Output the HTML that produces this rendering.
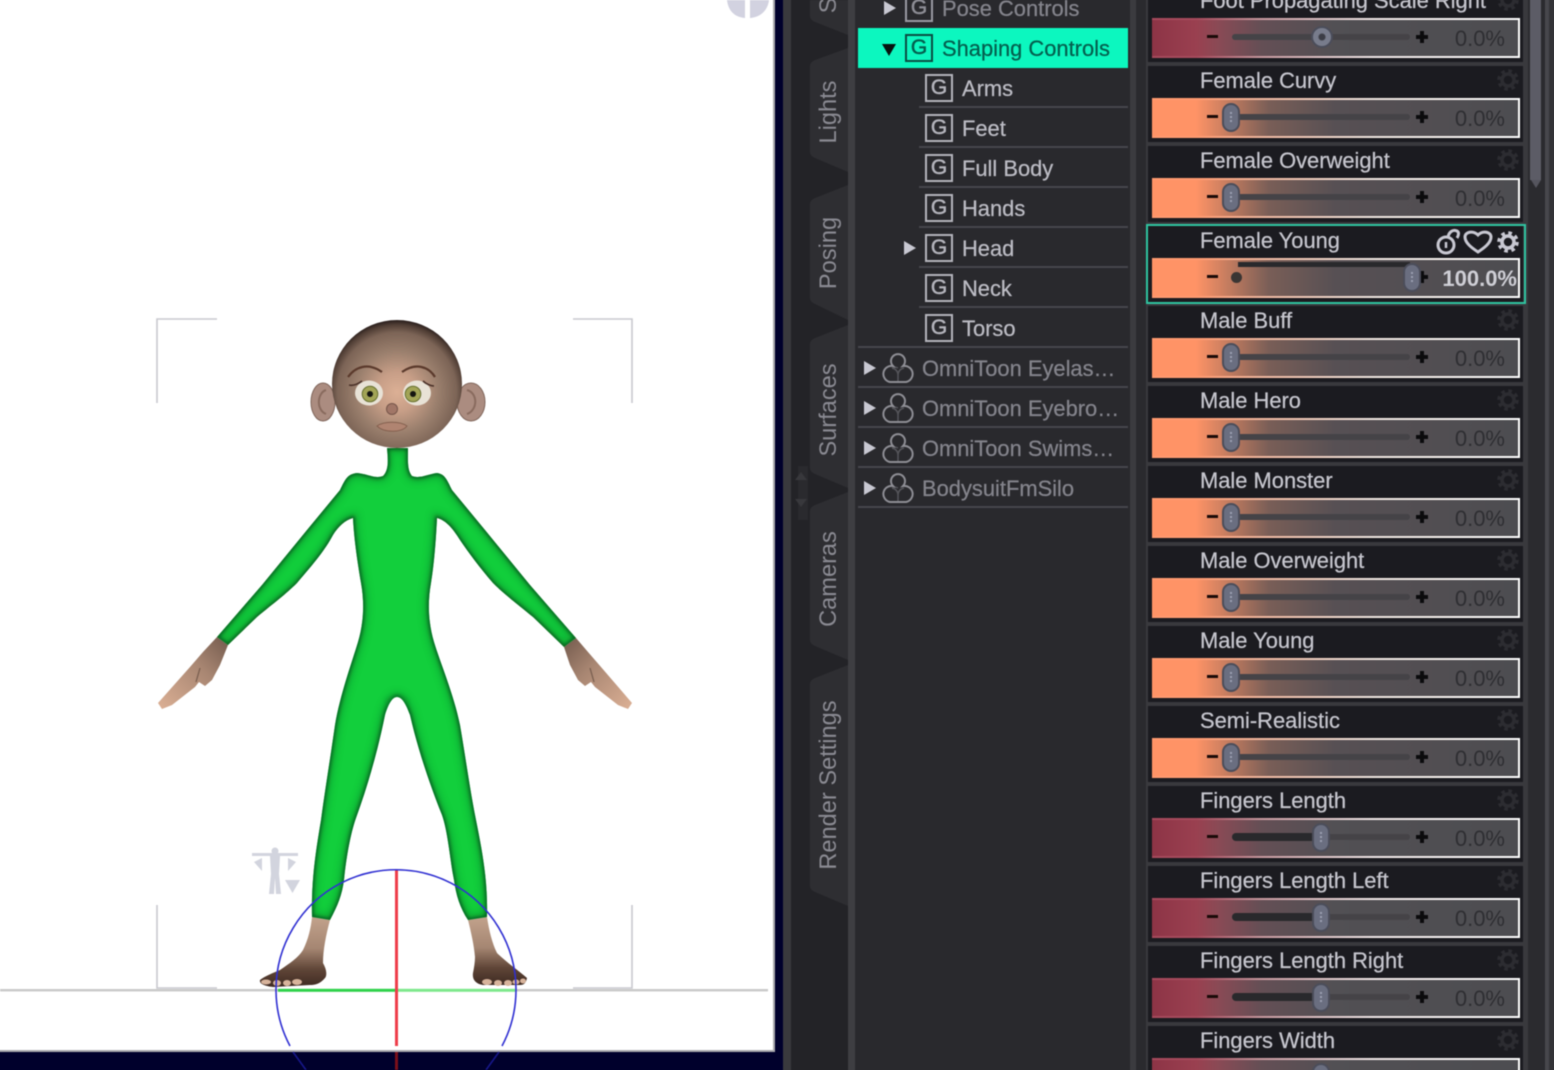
<!DOCTYPE html>
<html><head><meta charset="utf-8"><style>
html,body{margin:0;padding:0;width:1554px;height:1070px;overflow:hidden;background:#333337}
#o{position:absolute;left:0;top:0;width:1554px;height:1070px;overflow:hidden}
#w{position:absolute;left:0;top:0;width:1554px;height:1070px;filter:blur(.55px);font-family:"Liberation Sans",sans-serif}
.a{position:absolute}
.t{position:absolute;left:828.5px;transform:translate(-50%,-50%) rotate(-90deg);font-size:23.6px;line-height:26px;color:#8a8a92;white-space:nowrap}
.n{position:absolute;height:40px;line-height:39px;font-size:21.9px;white-space:nowrap;-webkit-text-stroke:.25px currentColor}
.c{color:#bcbcc4}.d{color:#84848c}
.ln{position:absolute;height:2px;background:#45454c;right:426px}
.gb{position:absolute;width:24px;height:24px;border:2px solid #b4b4bc;text-align:center;font-size:21px;line-height:24px;color:#b4b4bc;-webkit-text-stroke:.5px currentColor}
.tri{position:absolute;width:0;height:0;border-left:12px solid #c8c8d2;border-top:7px solid transparent;border-bottom:7px solid transparent}
.om{position:absolute;left:882px;width:32px;height:32px;overflow:visible}
.r{position:absolute;left:1148px;width:375px;height:76px;background:#1b1b20}
.r b{position:absolute;left:52px;top:1px;font-weight:normal;font-size:21.9px;line-height:28px;color:#c6c6ce;white-space:nowrap;-webkit-text-stroke:.25px currentColor}
.bar{position:absolute;left:4px;top:32px;width:368px;height:40px;background:linear-gradient(90deg,#ff9a70 0,#ff9a70 12%,#f0b8a0 30%,#efe6e0 60%,#fff 100%)}
.red .bar{background:linear-gradient(90deg,#a64a5c 0,#a64a5c 12%,#c89aa0 30%,#efe6e6 60%,#fff 100%)}
.in{position:absolute;left:0;top:2px;right:2px;bottom:2px;background:linear-gradient(90deg,#ff9366 0,#ff9366 12%,#c97e60 20%,#795e57 32%,#575054 50%,#4d4d51 100%)}
.red .in{background:linear-gradient(90deg,#8d3446 0,#9a4050 12%,#8a4a55 18%,#644f55 30%,#525054 50%,#4d4d51 100%)}
.mi{position:absolute;left:59px;top:49px;width:11px;height:3px;background:#1a0a08}
.p1{position:absolute;left:268px;top:49px;width:12px;height:4px;background:#0b0b0d}
.p2{position:absolute;left:272px;top:45px;width:4px;height:12px;background:#0b0b0d}
.tr{position:absolute;left:84px;top:48px;width:178px;height:6px;background:#454347;border-radius:3px}
.tr2{position:absolute;left:84px;top:47px;width:90px;height:8px;background:#29292c;border-radius:4px}
.v{position:absolute;right:18px;top:33px;line-height:40px;font-size:22px;color:#2e2e32}
.th{position:absolute;left:74px;top:37px;width:14px;height:25px;border:2px solid #4b4d5a;background:#6a6e80;border-radius:9px}
.th2{left:164px}
.th:after{content:"";position:absolute;left:6px;top:7px;width:2px;height:11px;background:repeating-linear-gradient(#9a9eb0 0,#9a9eb0 2px,transparent 2px,transparent 4px)}
.gr{position:absolute;left:348px;top:2px;width:24px;height:24px;color:#2c2c31}
</style></head><body><div id="o"><div id="w">
<svg width="0" height="0" style="position:absolute"><defs>
<symbol id="gear" viewBox="0 0 24 24"><circle cx="12" cy="12" r="9" fill="none" stroke="currentColor" stroke-width="3.6" stroke-dasharray="3.6 3.47"/><circle cx="12" cy="12" r="6" fill="none" stroke="currentColor" stroke-width="3.6"/></symbol>
<symbol id="om" viewBox="0 0 32 32" overflow="visible"><path d="M16 16A7 7 0 0 0 10 16M16 23A7 7 0 0 1 22 16M16 23A7 7 0 0 0 10 16M16 23V30" fill="none" stroke="#55555b" stroke-width="1.5"/><path d="M11 14A7 7 0 1 1 21 14A8 8 0 1 1 24 30L8 30A8 8 0 1 1 11 14Z" fill="none" stroke="#8e8e95" stroke-width="2"/></symbol>
<radialGradient id="hd" gradientUnits="userSpaceOnUse" cx="397" cy="392" r="71"><stop offset="0" stop-color="#dcb095"/><stop offset=".28" stop-color="#c79e87"/><stop offset=".58" stop-color="#9a7f6d"/><stop offset=".84" stop-color="#7c6456"/><stop offset=".95" stop-color="#4f3d34"/><stop offset="1" stop-color="#2f2320"/></radialGradient>
<linearGradient id="sk" x1="0" y1="0" x2="0" y2="1"><stop offset="0" stop-color="#c2a28c"/><stop offset=".45" stop-color="#a58672"/><stop offset=".75" stop-color="#5f4537"/><stop offset="1" stop-color="#3e2a22"/></linearGradient>
<linearGradient id="hn" x1="1" y1="0" x2="0" y2="1"><stop offset="0" stop-color="#735a4d"/><stop offset=".4" stop-color="#a88672"/><stop offset="1" stop-color="#dcb095"/></linearGradient>
<linearGradient id="hr" x1="0" y1="0" x2="1" y2="1"><stop offset="0" stop-color="#735a4d"/><stop offset=".4" stop-color="#a88672"/><stop offset="1" stop-color="#dcb095"/></linearGradient>
<filter id="bl" x="-10%" y="-10%" width="120%" height="120%"><feGaussianBlur stdDeviation="1.8"/></filter>
<filter id="bw" x="-10%" y="-10%" width="120%" height="120%"><feGaussianBlur stdDeviation="4"/></filter>
<clipPath id="bc"><path id="bp" d="M387 448C388 460 389 470 383 476C375 479 368 474 357 473C347 474 345 480 340 490L307 530L262 585L217 637L228 645L257 617C275 602 285 595 297 583C315 562 325 550 333 535C338 527 345 520 353 518C354 540 358 565 361 583C365 605 363 625 358 642C352 662 340 695 335 725C330 760 325 790 321 820C316 850 311 880 312 917L330 920C338 905 342 895 344 880C346 860 350 835 356 818C368 785 378 750 385 715C388 705 392 697 397 697C402 697 406 704 410 715C418 750 430 785 442 815C448 832 450 860 454 880C456 895 460 908 468 920L487 917C488 880 482 850 476 820C470 790 466 760 460 725C454 695 440 662 434 642C429 625 427 605 431 583C434 565 436 540 437 518C445 520 452 527 460 540C468 552 480 568 493 583C505 595 515 602 533 617L564 647L576 638L530 585L485 530L452 490C447 480 445 474 437 473C428 474 420 479 412 476C407 470 408 460 408 448Z"/></clipPath>
</defs></svg>

<!-- chrome -->
<div class="a" style="left:-10px;top:-10px;width:783px;height:1060px;background:#fff"></div>
<div class="a" style="left:773px;top:-10px;width:2px;height:1062px;background:#a9a9ad"></div>
<div class="a" style="left:-10px;top:1050px;width:785px;height:2px;background:#a9a9ad"></div>
<div class="a" style="left:775px;top:-10px;width:8px;height:1090px;background:#00002c"></div>
<div class="a" style="left:-10px;top:1052px;width:793px;height:28px;background:#00002c"></div>
<div class="a" style="left:783px;top:-10px;width:8px;height:1090px;background:#39393d"></div>
<div class="a" style="left:791px;top:-10px;width:57px;height:1090px;background:#232327"></div>
<div class="a" style="left:848px;top:-10px;width:7px;height:1090px;background:#3e3e42"></div>
<div class="a" style="left:855px;top:-10px;width:275px;height:1090px;background:#29292d"></div>
<div class="a" style="left:1130px;top:-10px;width:6px;height:1090px;background:#3b3b3f"></div>
<div class="a" style="left:1136px;top:-10px;width:10px;height:1090px;background:#2a2a2e"></div>
<div class="a" style="left:1146px;top:-10px;width:382px;height:1090px;background:#39393d"></div>
<div class="a" style="left:1528px;top:-10px;width:17px;height:1090px;background:#2b2b2f"></div>
<div class="a" style="left:1530px;top:-10px;width:11px;height:190px;background:#5c5c66"></div>
<div class="a" style="left:1531px;top:180px;width:0;height:0;border-left:5px solid transparent;border-right:5px solid transparent;border-top:8px solid #55555e"></div>
<div class="a" style="left:1545px;top:-10px;width:4px;height:1090px;background:#47474c"></div>
<div class="a" style="left:1549px;top:-10px;width:15px;height:1090px;background:#333337"></div>

<!-- tabs -->
<svg class="a" style="left:791px;top:0" width="57" height="1070" fill="#2e2e32">
<path d="M19 -20V16Q19 20 24 22L57 35V-20Z"/>
<path d="M57 48L24 60Q19 62 19 66V152Q19 156 24 158L57 172Z"/>
<path d="M57 185L24 198Q19 200 19 204V298Q19 302 24 304L57 320Z"/>
<path d="M57 325L24 338Q19 340 19 344V468Q19 472 24 474L57 488Z"/>
<path d="M57 492L24 505Q19 507 19 511V640Q19 644 24 646L57 660Z"/>
<path d="M57 665L24 678Q19 680 19 684V886Q19 890 24 892L57 906Z"/>
<rect x="7" y="466" width="10" height="54" fill="#2a2a2e"/>
<path d="M7 472L13 480H1Z" fill="#38383c" transform="translate(3 0)"/><path d="M4 491L10 483H-2Z" fill="#38383c" transform="translate(6 16)"/>
</svg>
<div class="t" style="top:-30px">Shaping</div>
<div class="t" style="top:112px">Lights</div>
<div class="t" style="top:253px">Posing</div>
<div class="t" style="top:410px">Surfaces</div>
<div class="t" style="top:579px">Cameras</div>
<div class="t" style="top:785px">Render Settings</div>

<!-- tree -->
<div class="a" style="left:858px;top:28px;width:270px;height:40px;background:#0cf7bf"></div>
<div class="tri" style="left:884px;top:1px"></div>
<div class="gb" style="left:905px;top:-6px;color:#8e8e96;border-color:#9a9aa2">G</div><div class="n d" style="left:942px;top:-11px">Pose Controls</div>
<div class="tri" style="left:882px;top:44px;border:7px solid transparent;border-top:12px solid #07120f;border-bottom:0"></div>
<div class="gb" style="left:905px;top:34px;color:#045f4e;border-color:#0a4c42">G</div><div class="n" style="left:942px;top:29px;color:#045f4e">Shaping Controls</div>

<div class="gb" style="left:925px;top:74px">G</div><div class="n c" style="left:962px;top:69px">Arms</div><div class="ln" style="left:919px;top:106px"></div>
<div class="gb" style="left:925px;top:114px">G</div><div class="n c" style="left:962px;top:109px">Feet</div><div class="ln" style="left:919px;top:146px"></div>
<div class="gb" style="left:925px;top:154px">G</div><div class="n c" style="left:962px;top:149px">Full Body</div><div class="ln" style="left:919px;top:186px"></div>
<div class="gb" style="left:925px;top:194px">G</div><div class="n c" style="left:962px;top:189px">Hands</div><div class="ln" style="left:919px;top:226px"></div>
<div class="tri" style="left:904px;top:241px"></div>
<div class="gb" style="left:925px;top:234px">G</div><div class="n c" style="left:962px;top:229px">Head</div><div class="ln" style="left:919px;top:266px"></div>
<div class="gb" style="left:925px;top:274px">G</div><div class="n c" style="left:962px;top:269px">Neck</div><div class="ln" style="left:919px;top:306px"></div>
<div class="gb" style="left:925px;top:314px">G</div><div class="n c" style="left:962px;top:309px">Torso</div><div class="ln" style="left:858px;top:346px"></div>

<div class="tri" style="left:864px;top:361px"></div><svg class="om" style="top:352px"><use href="#om"/></svg><div class="n d" style="left:922px;top:349px">OmniToon Eyelas…</div><div class="ln" style="left:858px;top:386px"></div>
<div class="tri" style="left:864px;top:401px"></div><svg class="om" style="top:392px"><use href="#om"/></svg><div class="n d" style="left:922px;top:389px">OmniToon Eyebro…</div><div class="ln" style="left:858px;top:426px"></div>
<div class="tri" style="left:864px;top:441px"></div><svg class="om" style="top:432px"><use href="#om"/></svg><div class="n d" style="left:922px;top:429px">OmniToon Swims…</div><div class="ln" style="left:858px;top:466px"></div>
<div class="tri" style="left:864px;top:481px"></div><svg class="om" style="top:472px"><use href="#om"/></svg><div class="n d" style="left:922px;top:469px">BodysuitFmSilo</div><div class="ln" style="left:858px;top:506px"></div>

<!-- sliders -->
<div class="r red" style="top:-14px"><b>Foot Propagating Scale Right</b><svg class="gr"><use href="#gear"/></svg><div class="bar"><div class="in"></div></div><div class="mi"></div><div class="tr"></div><div class="p1"></div><div class="p2"></div><div class="v">0.0%</div><div class="a" style="left:163px;top:40px;width:18px;height:18px;border-radius:50%;border:2px solid #4b4d5a;background:radial-gradient(circle,#3c3d46 0,#3c3d46 3px,#787c8c 4px)"></div></div>

<div class="r" style="top:66px"><b>Female Curvy</b><svg class="gr"><use href="#gear"/></svg><div class="bar"><div class="in"></div></div><div class="mi"></div><div class="tr"></div><div class="p1"></div><div class="p2"></div><div class="v">0.0%</div><div class="th"></div></div>
<div class="r" style="top:146px"><b>Female Overweight</b><svg class="gr"><use href="#gear"/></svg><div class="bar"><div class="in"></div></div><div class="mi"></div><div class="tr"></div><div class="p1"></div><div class="p2"></div><div class="v">0.0%</div><div class="th"></div></div>

<div class="a" style="left:1146px;top:224px;width:376px;height:76px;border:2px solid #2fc4a0"></div>
<div class="r" style="top:226px"><b>Female Young</b>
<svg class="a" style="left:286px;top:0" width="90" height="30" fill="none" stroke="#c8c8d2" stroke-width="3"><circle cx="12" cy="19" r="8"/><path d="M12 16V22" stroke-width="2.5"/><path d="M14 11C15 6 19 3 23 5C25 6 25 9 23 12"/><path d="M44 26C38 22 31 17 31 11C31 6 39 4 44 9C49 4 57 6 57 11C57 17 50 22 44 26Z"/></svg>
<svg class="a" style="left:348px;top:4px;color:#c8c8d2" width="24" height="24"><use href="#gear"/></svg>
<div class="bar"><div class="in"></div></div><div class="mi"></div><div class="p1"></div><div class="p2"></div>
<div class="a" style="left:90px;top:36px;width:172px;height:5px;background:#29292c"></div>
<div class="a" style="left:83px;top:46px;width:11px;height:11px;border-radius:50%;background:#3a3533"></div>
<div class="th" style="left:255px"></div>
<div class="v" style="right:6px;font-weight:bold;color:#cfcfd6">100.0%</div></div>

<div class="r" style="top:306px"><b>Male Buff</b><svg class="gr"><use href="#gear"/></svg><div class="bar"><div class="in"></div></div><div class="mi"></div><div class="tr"></div><div class="p1"></div><div class="p2"></div><div class="v">0.0%</div><div class="th"></div></div>
<div class="r" style="top:386px"><b>Male Hero</b><svg class="gr"><use href="#gear"/></svg><div class="bar"><div class="in"></div></div><div class="mi"></div><div class="tr"></div><div class="p1"></div><div class="p2"></div><div class="v">0.0%</div><div class="th"></div></div>
<div class="r" style="top:466px"><b>Male Monster</b><svg class="gr"><use href="#gear"/></svg><div class="bar"><div class="in"></div></div><div class="mi"></div><div class="tr"></div><div class="p1"></div><div class="p2"></div><div class="v">0.0%</div><div class="th"></div></div>
<div class="r" style="top:546px"><b>Male Overweight</b><svg class="gr"><use href="#gear"/></svg><div class="bar"><div class="in"></div></div><div class="mi"></div><div class="tr"></div><div class="p1"></div><div class="p2"></div><div class="v">0.0%</div><div class="th"></div></div>
<div class="r" style="top:626px"><b>Male Young</b><svg class="gr"><use href="#gear"/></svg><div class="bar"><div class="in"></div></div><div class="mi"></div><div class="tr"></div><div class="p1"></div><div class="p2"></div><div class="v">0.0%</div><div class="th"></div></div>
<div class="r" style="top:706px"><b>Semi-Realistic</b><svg class="gr"><use href="#gear"/></svg><div class="bar"><div class="in"></div></div><div class="mi"></div><div class="tr"></div><div class="p1"></div><div class="p2"></div><div class="v">0.0%</div><div class="th"></div></div>

<div class="r red" style="top:786px"><b>Fingers Length</b><svg class="gr"><use href="#gear"/></svg><div class="bar"><div class="in"></div></div><div class="mi"></div><div class="tr"></div><div class="tr2"></div><div class="p1"></div><div class="p2"></div><div class="v">0.0%</div><div class="th th2"></div></div>
<div class="r red" style="top:866px"><b>Fingers Length Left</b><svg class="gr"><use href="#gear"/></svg><div class="bar"><div class="in"></div></div><div class="mi"></div><div class="tr"></div><div class="tr2"></div><div class="p1"></div><div class="p2"></div><div class="v">0.0%</div><div class="th th2"></div></div>
<div class="r red" style="top:946px"><b>Fingers Length Right</b><svg class="gr"><use href="#gear"/></svg><div class="bar"><div class="in"></div></div><div class="mi"></div><div class="tr"></div><div class="tr2"></div><div class="p1"></div><div class="p2"></div><div class="v">0.0%</div><div class="th th2"></div></div>
<div class="r red" style="top:1026px"><b>Fingers Width</b><svg class="gr"><use href="#gear"/></svg><div class="bar"><div class="in"></div></div><div class="th th2"></div></div>

<!-- viewport -->
<svg class="a" style="left:0;top:0" width="783" height="1070">
<path d="M727 0C728 9 733 17 745 18V0ZM750 0V18C762 17 768 9 769 0Z" fill="#d2d2e0"/>
<g fill="none" stroke="#c9c9cf" stroke-width="1.6">
<path d="M157 403V319H217M573 319H632V403M157 905V988H217M573 988H632V905"/></g>
<rect x="0" y="989" width="768" height="2.4" fill="#c9c9c9"/>
<!-- small figure -->
<g fill="#d2d4de"><rect x="252" y="853" width="46" height="3"/><circle cx="275" cy="851" r="3.5"/><path d="M270 856H280L279 874L281 894H276L275 878L274 894H269L271 874Z"/><path d="M285 880H300L292.5 893Z"/><path d="M254 862L262 858L262 871Z"/><path d="M296 862L288 858L288 871Z"/></g>
<!-- legs/feet -->
<path d="M312 917L330 920C326 935 323 950 323 963C327 970 327 976 325 978C320 984 315 985 310 985L273 987C265 986 259 984 260 980C265 976 273 973 280 970C290 963 298 958 303 950C308 940 311 928 312 917Z" fill="url(#sk)"/>
<path d="M468 920L487 917C489 930 492 943 497 953C506 962 518 970 527 978C526 983 524 985 520 985L483 985C476 984 472 980 473 973C474 968 475 962 475 957C474 945 471 932 468 920Z" fill="url(#sk)"/>
<g fill="#d8b49c"><ellipse cx="266" cy="982" rx="5" ry="2.5"/><ellipse cx="277" cy="983" rx="4" ry="3"/><ellipse cx="287" cy="983" rx="4" ry="3"/><ellipse cx="297" cy="982" rx="5" ry="3"/><ellipse cx="487" cy="982" rx="5" ry="3"/><ellipse cx="498" cy="983" rx="4" ry="3"/><ellipse cx="508" cy="983" rx="4" ry="3"/><ellipse cx="516" cy="982" rx="3.5" ry="2.5"/><ellipse cx="523" cy="981" rx="3" ry="2.5"/></g>
<!-- hands -->
<path d="M217 637L203 652L190 667L158 703L162 709L172 705L195 687L199 682L205 686L212 680L220 665L228 645Z" fill="url(#hn)"/>
<path d="M576 638L588 652L601 667L632 703L628 709L618 705L595 687L591 682L585 686L578 680L570 665L564 647Z" fill="url(#hr)"/>
<path d="M200 668L196 682M590 668L594 682" stroke="#7a5f50" stroke-width="1.3" fill="none"/>
<!-- body -->
<use href="#bp" fill="#12cf3c"/>
<g clip-path="url(#bc)"><use href="#bp" fill="none" stroke="#0a7a2a" stroke-width="9" filter="url(#bw)" opacity=".45"/><use href="#bp" fill="none" stroke="#07501c" stroke-width="3" filter="url(#bl)"/><path d="M390 720L385 700Q397 690 409 700L404 720" fill="#0a9a30" filter="url(#bl)" opacity=".4"/></g>
<!-- head -->
<ellipse cx="323" cy="402" rx="12" ry="19" fill="#ab8c80" stroke="#80665b"/><path d="M326 390C317 393 316 410 326 414" fill="none" stroke="#7a5c50" stroke-width="2" opacity=".7"/>
<ellipse cx="471" cy="402" rx="14" ry="19" fill="#ab8c80" stroke="#80665b"/><path d="M467 390C478 393 478 410 467 414" fill="none" stroke="#7a5c50" stroke-width="2" opacity=".7"/>
<ellipse cx="397" cy="384" rx="65" ry="64" fill="url(#hd)"/>
<ellipse cx="369" cy="393" rx="14" ry="12.5" fill="#e8e2d6"/><ellipse cx="417" cy="393" rx="14" ry="12.5" fill="#e8e2d6"/>
<circle cx="370" cy="394" r="7.8" fill="#a2a456" stroke="#66702f"/><circle cx="413" cy="394" r="7.8" fill="#a2a456" stroke="#66702f"/>
<circle cx="370" cy="394" r="3" fill="#151510"/><circle cx="413" cy="394" r="3" fill="#151510"/>
<g fill="none" stroke="#5b3a2c" stroke-width="2.2"><path d="M348 377C355 367 368 362 382 372"/><path d="M402 372C416 362 429 367 435 377"/><path d="M349 385C353 386 358 384 362 381M434 386C431 386 426 384 423 381" stroke="#4a3128" stroke-width="1.6"/></g>
<circle cx="392" cy="409" r="5.5" fill="#a17667" stroke="#76564a"/>
<path d="M377 426C384 421 400 421 407 426C402 433 384 433 377 426Z" fill="#b08471" stroke="#84604f"/>
<!-- gizmo -->
<rect x="278" y="988.8" width="118" height="3" fill="#2fd24a"/><rect x="396" y="988.8" width="120" height="3" fill="#7ee88c"/>
<rect x="395" y="870" width="3" height="176" fill="#ee3d4a"/><rect x="395" y="1052" width="3" height="18" fill="#7a0f1a"/>
<path d="M290 1046A120 120 0 1 1 502 1046" fill="none" stroke="#3030d2" stroke-width="1.6"/>
<path d="M293 1052L306 1070M499 1052L486 1070" fill="none" stroke="#17178a" stroke-width="1.6"/>
</svg>
</div></div></body></html>
